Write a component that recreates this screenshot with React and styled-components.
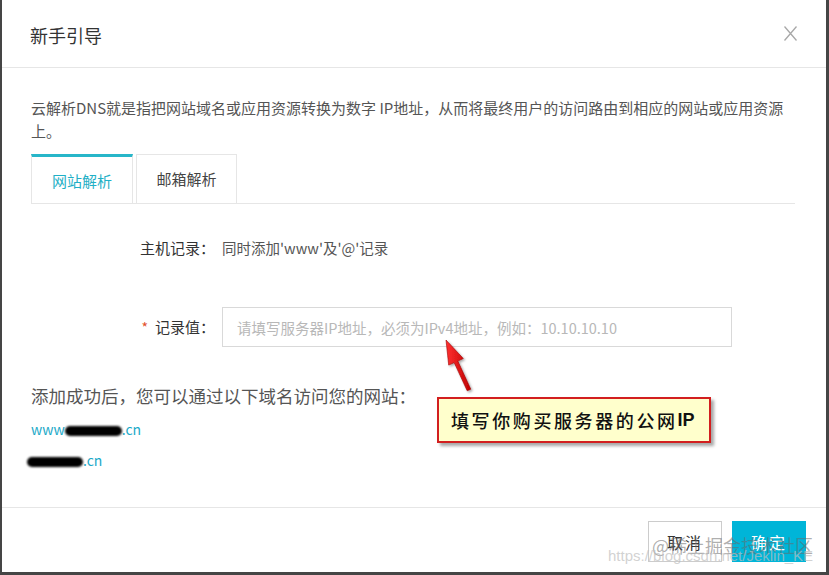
import React from "react";
import styled, { createGlobalStyle } from "styled-components";

const Global = createGlobalStyle`
  html, body { margin: 0; padding: 0; background: #454545; }
  body { font-family: "Noto Sans CJK SC", "Noto Sans", sans-serif; }
  #root { height: 575px; }
`;

const Frame = styled.div`
  width: 824px;
  height: 572px;
  margin-left: 2px;
  background: #fff;
  position: relative;
  display: flex;
  flex-direction: column;
  overflow: hidden;
`;

const Header = styled.div`
  height: 67px;
  border-bottom: 1px solid #e6e6e6;
  display: flex;
  align-items: center;
  justify-content: space-between;
  padding: 0 28px 0 28px;
  box-sizing: content-box;
  flex-shrink: 0;
`;

const Title = styled.div`
  font-size: 18px;
  color: #333;
  line-height: 24px;
  margin-top: 2px;
`;

const Close = styled.svg`
  width: 15px;
  height: 17px;
  margin-right: 0;
`;

const Body = styled.div`
  flex: 1;
  padding: 28px 31px 0 29px;
  display: flex;
  flex-direction: column;
`;

const Desc = styled.p`
  margin: 0;
  font-size: 15px;
  line-height: 23px;
  color: #555;
  max-width: 756px;
`;

const Tabs = styled.div`
  margin-top: 12px;
  display: flex;
  gap: 3px;
  border-bottom: 1px solid #e6e6e6;
`;

const Tab = styled.div`
  width: ${(p) => p.$w}px;
  height: 49px;
  box-sizing: border-box;
  border: 1px solid #e6e6e6;
  border-bottom: none;
  border-top: ${(p) => (p.$active ? "3px solid #27b6c9" : "1px solid #e6e6e6")};
  display: flex;
  align-items: center;
  justify-content: center;
  padding-bottom: ${(p) => (p.$active ? "0" : "2px")};
  font-size: 15px;
  color: ${(p) => (p.$active ? "#1fb0c6" : "#444")};
`;

const Form = styled.div`
  display: grid;
  grid-template-columns: 184px 510px;
  column-gap: 7px;
  row-gap: 39px;
  margin-top: 24px;
  align-items: center;
`;

const Label = styled.div`
  font-size: 15px;
  color: #333;
  text-align: right;
  line-height: 40px;
`;

const Star = styled.span`
  color: #e2512b;
  margin-right: 7px;
  font-size: 14px;
`;

const Value = styled.div`
  font-size: 14.5px;
  color: #555;
  line-height: 40px;
`;

const Input = styled.input`
  width: 510px;
  height: 40px;
  box-sizing: border-box;
  border: 1px solid #d9d9d9;
  padding: 0 14px;
  font-family: inherit;
  font-size: 14.5px;
  color: #333;
  outline: none;
  &::placeholder { color: #b8b8b8; }
`;

const Note = styled.div`
  margin-top: 37px;
  font-size: 17.5px;
  line-height: 24px;
  color: #555;
`;

const Links = styled.div`
  display: flex;
  flex-direction: column;
  gap: 10px;
  margin-top: 11px;
`;

const Link = styled.div`
  display: flex;
  align-items: center;
  font-size: 14px;
  line-height: 21px;
  color: #1ba9c8;
  margin-left: ${(p) => p.$shift || 0}px;
`;

const Blob = styled.span`
  display: inline-block;
  width: ${(p) => p.$w}px;
  height: 10px;
  border-radius: 6px;
  background: #000;
  filter: blur(0.8px);
  margin-top: 2px;
`;

const Footer = styled.div`
  height: 65px;
  flex-shrink: 0;
  border-top: 1px solid #e6e6e6;
  display: flex;
  justify-content: flex-end;
  align-items: flex-start;
  gap: 10px;
  padding: 13px 20px 0 0;
  box-sizing: border-box;
`;

const Button = styled.div`
  width: 74px;
  height: 41px;
  box-sizing: border-box;
  border: 1px solid ${(p) => (p.$primary ? "#00b5d8" : "#ccc")};
  background: ${(p) => (p.$primary ? "#00b5d8" : "#fff")};
  color: ${(p) => (p.$primary ? "#fff" : "#333")};
  font-size: 16px;
  letter-spacing: 2px;
  display: flex;
  align-items: center;
  justify-content: center;
`;

const Arrow = styled.svg`
  position: absolute;
  left: 434px;
  top: 336px;
  width: 42px;
  height: 62px;
  overflow: visible;
`;

const Callout = styled.div`
  position: absolute;
  left: 435px;
  top: 397px;
  width: 274px;
  height: 46px;
  box-sizing: border-box;
  border: 2px solid #d21f1f;
  background: #ffffcc;
  box-shadow: 3px 3px 3px rgba(0, 0, 0, 0.35);
  display: flex;
  align-items: center;
  padding-left: 12px;
  font-size: 18px;
  font-weight: 500;
  letter-spacing: 2.6px;
  color: #111;
`;

const Bold = styled.span`
  font-weight: 700;
  font-family: "Liberation Sans", Arial, sans-serif;
  letter-spacing: 0;
`;

const Mark = styled.div`
  position: absolute;
  left: ${(p) => p.$x}px;
  top: ${(p) => p.$y}px;
  font-size: ${(p) => p.$size}px;
  color: ${(p) => p.$color};
  white-space: nowrap;
  pointer-events: none;
  font-family: ${(p) => p.$font || "inherit"};
`;

export default function App() {
  return (
    <>
      <Global />
      <Frame>
        <Header>
          <Title>新手引导</Title>
          <Close viewBox="0 0 15 17">
            <path d="M1.5 1.5 L13.5 15.5 M13.5 1.5 L1.5 15.5" stroke="#a8a8a8" strokeWidth="1.3" fill="none" />
          </Close>
        </Header>
        <Body>
          <Desc>
            云解析DNS就是指把网站域名或应用资源转换为数字 IP地址，从而将最终用户的访问路由到相应的网站或应用资源上。
          </Desc>
          <Tabs>
            <Tab $active $w={102}>网站解析</Tab>
            <Tab $w={101}>邮箱解析</Tab>
          </Tabs>
          <Form>
            <Label>主机记录：</Label>
            <Value>同时添加'www'及'@'记录</Value>
            <Label>
              <Star>*</Star>记录值：
            </Label>
            <Input placeholder="请填写服务器IP地址，必须为IPv4地址，例如：10.10.10.10" />
          </Form>
          <Note>添加成功后，您可以通过以下域名访问您的网站：</Note>
          <Links>
            <Link>
              www<Blob $w={57} />.cn
            </Link>
            <Link $shift={-4}>
              <Blob $w={56} />.cn
            </Link>
          </Links>
        </Body>
        <Footer>
          <Button>取消</Button>
          <Button $primary>确定</Button>
        </Footer>

        <Arrow viewBox="0 0 42 62">
          <defs>
            <linearGradient id="ag" x1="0" y1="0" x2="1" y2="0">
              <stop offset="0" stopColor="#ff3030" />
              <stop offset="1" stopColor="#c00000" />
            </linearGradient>
            <filter id="sh" x="-50%" y="-50%" width="200%" height="200%">
              <feDropShadow dx="1.5" dy="1.5" stdDeviation="1" floodColor="#000" floodOpacity="0.35" />
            </filter>
          </defs>
          <polygon
            points="10,4 27.3,22.5 21.8,25 34.8,53.2 31.2,54.8 18.2,26.6 12.7,29.1"
            fill="url(#ag)"
            stroke="#a00000"
            strokeWidth="0.6"
            filter="url(#sh)"
          />
        </Arrow>
        <Callout>
          填写你购买服务器的公网<Bold>IP</Bold>
        </Callout>

        <Mark $x={650} $y={532} $size={18} $color="rgba(105,105,105,0.55)">
          @稀土掘金技术社区
        </Mark>
        <Mark $x={606} $y={547} $size={15} $color="rgba(190,190,190,0.7)" $font={'"Liberation Sans", sans-serif'}>
          https://blog.csdn.net/Jeklin_KE
        </Mark>
      </Frame>
    </>
  );
}
